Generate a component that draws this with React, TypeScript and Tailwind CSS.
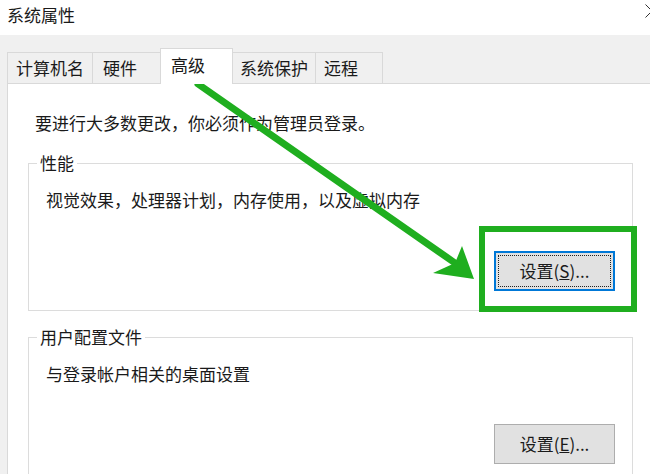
const tabs = [
  { label: "计算机名", w: "w-[86px]", pl: "pl-[8px]" },
  { label: "硬件", w: "w-[69px]", pl: "pl-[10px]" },
  { label: "高级", w: "w-[73px]", pl: "pl-[10px]", active: true },
  { label: "系统保护", w: "w-[84px]", pl: "pl-[7px]" },
  { label: "远程", w: "w-[68px]", pl: "pl-[8px]" },
];

function Tab({ label, w, pl, active, first }: { label: string; w: string; pl: string; active?: boolean; first?: boolean }) {
  if (active) {
    return (
      <div
        className={`relative z-10 -ml-px -mb-px h-[36px] ${w} ${pl} pt-[3px] bg-white border-t border-l border-r border-[#d9d9d9]`}
      >
        <span className="leading-[22px]">{label}</span>
      </div>
    );
  }
  return (
    <div
      className={`h-[31px] ${w} ${pl} ${first ? "" : "-ml-px"} flex items-center bg-[#f0f0f0] border-t border-l border-r border-[#d9d9d9]`}
    >
      <span className="leading-[22px]">{label}</span>
    </div>
  );
}

const App: React.FC = () => {
  return (
    <div className="relative w-[650px] h-[474px] overflow-hidden bg-[#f0f0f0] text-[17px] text-[#1a1a1a] font-['Noto_Sans_CJK_SC','Microsoft_YaHei',sans-serif]">
      {/* title bar */}
      <div className="h-[35px] bg-white pl-[7px] pt-[4px] leading-[22px]">系统属性</div>

      <div className="pl-[7px] pt-[13px]">
        <div className="flex items-end h-[35px]">
          {tabs.map((t, i) => (
            <Tab key={t.label} {...t} first={i === 0} />
          ))}
        </div>

        <div className="w-[700px] h-[400px] bg-white border border-[#d9d9d9] pt-[28px] px-[20px]">
          <p className="pl-[7px] leading-[22px]">要进行大多数更改，你必须作为管理员登录。</p>

          <fieldset className="mt-[18px] w-[605px] border border-[#dcdcdc] pl-[17px] pr-[17px] pb-[19px]">
            <legend className="ml-[-9px] px-[3px] leading-[22px]">性能</legend>
            <p className="mt-[15px] leading-[22px]">视觉效果，处理器计划，内存使用，以及虚拟内存</p>
            <div className="flex justify-end mt-[40px]">
              <button className="w-[121px] h-[40px] bg-[#e1e1e1] border-2 border-[#0078d7] p-[2px]">
                <span className="flex items-center justify-center w-full h-full border border-dotted border-[#222] leading-[22px]">
                  设置(<span className="underline">S</span>)...
                </span>
              </button>
            </div>
          </fieldset>

          <fieldset className="mt-[15px] w-[605px] h-[200px] border border-[#dcdcdc] pl-[17px] pr-[17px]">
            <legend className="ml-[-9px] px-[3px] leading-[22px]">用户配置文件</legend>
            <p className="mt-[15px] leading-[22px]">与登录帐户相关的桌面设置</p>
            <div className="flex justify-end mt-[39px]">
              <button className="w-[121px] h-[40px] bg-[#e1e1e1] border border-[#adadad] leading-[22px]">
                设置(<span className="underline">E</span>)...
              </button>
            </div>
          </fieldset>
        </div>
      </div>

      {/* close glyph, cut off at the right edge */}
      <svg className="absolute left-0 top-0 pointer-events-none" width="650" height="474">
        <path d="M645.5 4.5 L658.5 17.5 M658.5 4.5 L645.5 17.5" stroke="#333" strokeWidth="1" fill="none" />
      </svg>

      {/* annotation: green arrow and highlight box */}
      <svg className="absolute left-0 top-0 pointer-events-none" width="650" height="474">
        <line x1="198" y1="84" x2="455" y2="263" stroke="#1fae1f" strokeWidth="7" strokeLinecap="round" />
        <polygon points="474,279 462,246 455,263 433,273" fill="#1fae1f" />
      </svg>
      <div className="absolute left-[479px] top-[226px] w-[158px] h-[86px] border-[6px] border-[#1fae1f] pointer-events-none" />
    </div>
  );
};

export default App;
